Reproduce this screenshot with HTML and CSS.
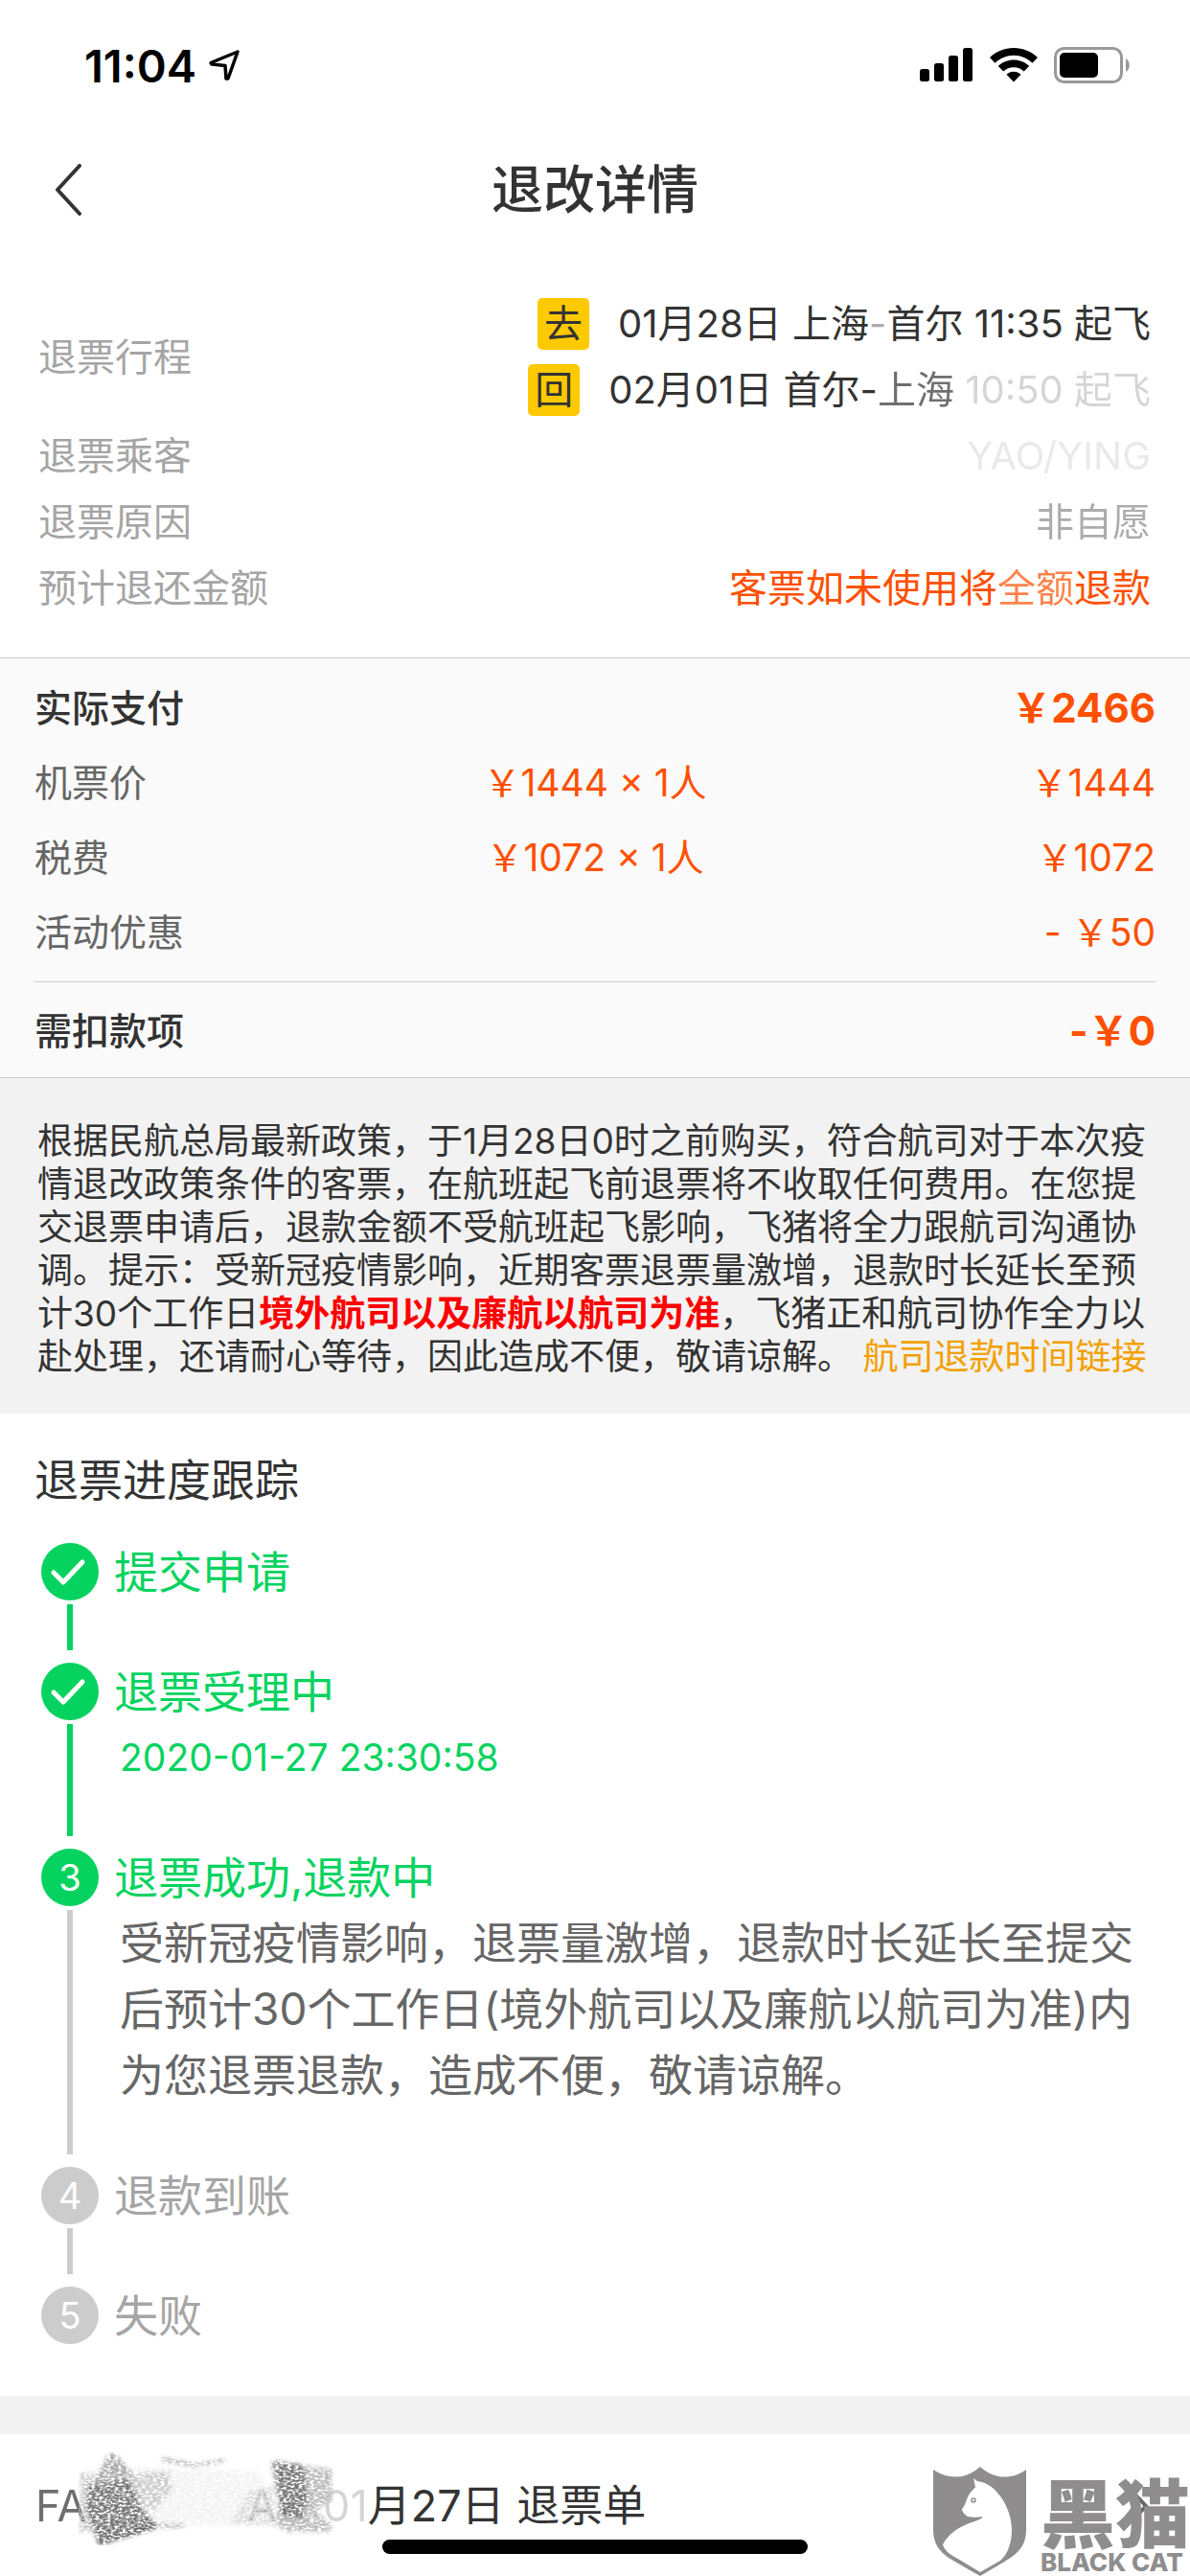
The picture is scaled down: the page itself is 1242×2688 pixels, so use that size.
FILE: index.html
```html
<!DOCTYPE html>
<html lang="zh-CN">
<head>
    <meta charset="UTF-8">
    <meta name="viewport" content="width=device-width, initial-scale=1.0">
    <title>退改详情</title>
    <link rel="stylesheet" href="styles.css">
</head>
<body>

<!-- Status bar -->
<div class="status-bar">
    <div class="status-left">
        <span class="clock">11:04</span>
        <svg class="icon-location" viewBox="0 0 34 34"><path d="M31 3 L3 14.500 L4 16 L18 17.500 L19 31 L21 31 Z" fill="none" stroke="#000" stroke-width="3.500" stroke-linejoin="round"/></svg>
    </div>
    <div class="status-right">
        <svg class="icon-signal" viewBox="0 0 56 36">
            <rect x="0" y="22" width="10" height="13" rx="2.500"/>
            <rect x="15" y="16" width="10" height="19" rx="2.500"/>
            <rect x="30" y="8" width="10" height="27" rx="2.500"/>
            <rect x="45" y="0" width="10" height="35" rx="2.500"/>
        </svg>
        <svg class="icon-wifi" viewBox="0 0 50 36">
            <path d="M25 0 C34.500 0 43.500 3.700 50 10 L44.500 15.700 C39.300 10.700 32.300 7.700 25 7.700 C17.700 7.700 10.700 10.700 5.500 15.700 L0 10 C6.500 3.700 15.500 0 25 0 Z"/>
            <path d="M25 12.500 C31.200 12.500 36.900 14.900 41.200 18.900 L35.700 24.400 C32.900 21.800 29.100 20.200 25 20.200 C20.900 20.200 17.100 21.800 14.300 24.400 L8.800 18.900 C13.100 14.900 18.800 12.500 25 12.500 Z"/>
            <path d="M25 24.800 C27.900 24.800 30.500 25.900 32.500 27.700 L25 35.500 L17.500 27.700 C19.500 25.900 22.100 24.800 25 24.800 Z"/>
        </svg>
        <svg class="icon-battery" viewBox="0 0 80 38">
            <rect x="1.500" y="1.500" width="69" height="35" rx="9" fill="none" stroke="#999" stroke-width="3"/>
            <rect x="6" y="6" width="40" height="26" rx="5"/>
            <path d="M75 12 C80 14.500 80 23.500 75 26 Z" fill="#999"/>
        </svg>
    </div>
</div>

<!-- Nav bar -->
<header class="nav">
    <button class="back" aria-label="返回">
        <svg viewBox="0 0 30 54"><path d="M27 2 L4 27 L27 52" fill="none" stroke="#333" stroke-width="4" stroke-linecap="round" stroke-linejoin="round"/></svg>
    </button>
    <h1>退改详情</h1>
</header>

<!-- Refund summary -->
<section class="summary">
    <div class="row">
        <span class="label">退票行程</span>
        <div class="trips">
            <p class="trip"><span class="tag">去</span><span>01月28日 上海<span class="fade-2">-</span>首尔 11:35 起飞</span></p>
            <p class="trip"><span class="tag">回</span><span>02月01日 首尔-<span class="fade-1">上海</span> <span class="fade-3">10:50 起飞</span></span></p>
        </div>
    </div>
    <div class="row"><span class="label">退票乘客</span><span class="fade-4">YAO/YING</span></div>
    <div class="row"><span class="label">退票原因</span><span class="fade-2">非自愿</span></div>
    <div class="row"><span class="label">预计退还金额</span><span class="price">客票如未使用将<span class="fade-1">全额</span>退款</span></div>
</section>

<!-- Price detail -->
<section class="bill">
    <div class="bill-row total"><span>实际支付</span><span></span><span class="price">￥2466</span></div>
    <div class="bill-row"><span>机票价</span><span class="price">￥1444 × 1人</span><span class="price">￥1444</span></div>
    <div class="bill-row"><span>税费</span><span class="price">￥1072 × 1人</span><span class="price">￥1072</span></div>
    <div class="bill-row"><span>活动优惠</span><span></span><span class="price">- ￥50</span></div>
    <div class="bill-row total deduct"><span>需扣款项</span><span></span><span class="price">-￥0</span></div>
</section>

<p class="notice">根据民航总局最新政策，于1月28日0时之前购买，符合航司对于本次疫情退改政策条件的客票，在航班起飞前退票将不收取任何费用。在您提交退票申请后，退款金额不受航班起飞影响，飞猪将全力跟航司沟通协调。提示：受新冠疫情影响，近期客票退票量激增，退款时长延长至预计30个工作日<strong>境外航司以及廉航以航司为准</strong>，飞猪正和航司协作全力以赴处理，还请耐心等待，因此造成不便，敬请谅解。 <a href="#">航司退款时间链接</a></p>

<!-- Progress -->
<section class="progress">
    <h2>退票进度跟踪</h2>
    <ol class="steps">
        <li class="step done">
            <div class="marker">
                <span class="dot"><svg viewBox="0 0 60 60"><path d="M13 31 L23 41 L43 20" fill="none" stroke="#fff" stroke-width="5" stroke-linecap="round" stroke-linejoin="round"/></svg></span>
                <span class="line"></span>
            </div>
            <div class="step-body"><h3>提交申请</h3></div>
        </li>
        <li class="step done">
            <div class="marker">
                <span class="dot"><svg viewBox="0 0 60 60"><path d="M13 31 L23 41 L43 20" fill="none" stroke="#fff" stroke-width="5" stroke-linecap="round" stroke-linejoin="round"/></svg></span>
                <span class="line"></span>
            </div>
            <div class="step-body">
                <h3>退票受理中</h3>
                <p class="time">2020-01-27 23:30:58</p>
            </div>
        </li>
        <li class="step current">
            <div class="marker"><span class="dot">3</span><span class="line"></span></div>
            <div class="step-body">
                <h3>退票成功,退款中</h3>
                <p>受新冠疫情影响，退票量激增，退款时长延长至提交后预计30个工作日(境外航司以及廉航以航司为准)内为您退票退款，造成不便，敬请谅解。</p>
            </div>
        </li>
        <li class="step">
            <div class="marker"><span class="dot">4</span><span class="line"></span></div>
            <div class="step-body"><h3>退款到账</h3></div>
        </li>
        <li class="step">
            <div class="marker"><span class="dot">5</span></div>
            <div class="step-body"><h3>失败</h3></div>
        </li>
    </ol>
</section>

<!-- Next order -->
<section class="order">
    <a class="order-link" href="#">
        <span class="order-name"><span class="fade-1">FA</span><span class="fade-2">A</span></span>
        <span><span class="fade-3">01</span>月27日 退票单</span>
        <svg class="icon-more" viewBox="0 0 20 36"><path d="M3 3 L17 18 L3 33" fill="none" stroke="#666" stroke-width="4"/></svg>
    </a>
    <!-- pencil scribble over the passenger name -->
    <svg class="scribble" viewBox="0 0 290 110">
        <defs>
            <filter id="grain" x="0" y="0" width="100%" height="100%">
                <feGaussianBlur in="SourceGraphic" stdDeviation="2" result="soft"/>
                <feTurbulence type="fractalNoise" baseFrequency="0.250 0.500" numOctaves="3" seed="4" result="n"/>
                <feColorMatrix in="n" type="matrix" values="0 0 0 0 0  0 0 0 0 0  0 0 0 0 0  0 0 0 4 -1.300" result="a"/>
                <feComposite in="soft" in2="a" operator="in"/>
            </filter>
        </defs>
        <g filter="url(#grain)">
            <path d="M4 22 H18 V84 H2 Z" fill="#ccc"/>
            <path d="M34 1 L40 2 L62 26 L66 50 L24 50 L8 46 L24 20 Z" fill="#aaa"/>
            <path d="M12 36 L60 28 L66 56 L84 76 L84 78 L22 96 L10 60 Z" fill="#777"/>
            <path d="M22 94 L84 74 V80 L24 98 Z" fill="#555"/>
            <path d="M60 16 L190 20 L204 50 L190 78 L84 78 L66 50 Z" fill="#f3f3f3"/>
            <path d="M54 24 L96 20 L100 40 L80 62 L68 58 Z" fill="#ccc"/>
            <path d="M88 6 L124 13 L156 8 L154 11 L124 16 L90 10 Z" fill="#999"/>
            <path d="M84 75 H112 V80 H84 Z" fill="#bbb"/>
            <path d="M160 76 L180 40 L206 36 L208 78 Z" fill="#ddd"/>
            <path d="M202 10 L266 18 L268 50 L250 62 L266 76 V84 H220 L206 76 L212 60 Z" fill="#bbb"/>
            <path d="M206 10 L236 14 L242 50 L236 72 L212 68 Z" fill="#777"/>
        </g>
    </svg>
    <div class="home-bar"></div>
    <div class="watermark">
        <svg class="shield" viewBox="0 0 98 115">
            <path d="M0 3 C16 14 35 13 49 0 C63 13 82 14 97 3 V66 C97 84 86 92 76 98 L49 114 L21 98 C11 92 0 84 0 66 Z" fill="#8f8d8e"/>
            <path d="M42 12 L46 15 C66 17 82 43 82 66 C82 82 76 93 70 98 L49 110 L24 95 C16 91 11 86 10 81 C16 70 26 63 40 58 C47 56 51 54 52 52 C46 53 41 53 36 52 C33 50 30 47 30 44 C34 40 34 34 38 28 C40 25 44 22 44 21 Z" fill="#fff"/>
            <circle cx="42" cy="35" r="2" fill="none" stroke="#8f8d8e" stroke-width="1.500"/>
        </svg>
        <div class="brand"><span class="brand-cn">黑猫</span><span class="brand-en">BLACK CAT</span></div>
    </div>
</section>

</body>
</html>
```
FILE: styles.css
```css
* {
    box-sizing: border-box;
}

body {
    margin: 0;
    background-color: #fff;
    font-family: Inter, "Noto Sans CJK SC", sans-serif;
    font-size: 40px;
    color: #333;
}

h1, h2, h3, p, ol {
    margin: 0;
    padding: 0;
    font-weight: 400;
}

a {
    color: inherit;
    text-decoration: none;
}

/* Status bar */
.status-bar {
    display: flex;
    justify-content: space-between;
    align-items: center;
    height: 136px;
    padding: 0 62px 0 88px;
}

.status-left, .status-right {
    display: flex;
    align-items: center;
}

.status-left {
    gap: 12px;
}

.status-right {
    gap: 17px;
}

.clock {
    font-size: 47px;
    font-weight: 600;
    color: #000;
}

.icon-location { width: 34px; height: 34px; }
.icon-signal { width: 56px; height: 36px; }
.icon-wifi { width: 50px; height: 36px; }
.icon-battery { width: 80px; height: 38px; }

/* Nav */
.nav {
    display: grid;
    grid-template-columns: 1fr auto 1fr;
    align-items: center;
    height: 124px;
    padding: 0 40px;
}

.nav h1 {
    padding-bottom: 8px;
    font-size: 54px;
    font-weight: 500;
}

.back {
    justify-self: start;
    padding: 0 16px;
    border: none;
    background: none;
}

.back svg {
    display: block;
    width: 30px;
    height: 54px;
}

/* Summary */
.summary {
    padding: 43px 41px 38px 40px;
}

.row {
    display: flex;
    justify-content: space-between;
    align-items: center;
    line-height: 69px;
}

.label {
    color: #a5a5a5;
}

.trips {
    display: flex;
    flex-direction: column;
    align-items: flex-end;
}

.trip {
    display: flex;
    align-items: center;
}

.tag {
    width: 54px;
    height: 54px;
    margin-right: 30px;
    border-radius: 5px;
    background-color: #ffc900;
    line-height: 54px;
    text-align: center;
}

.price {
    color: #ff5000;
}

/* rubbed out text */
.fade-1 { opacity: 0.7; }
.fade-2 { opacity: 0.4; }
.fade-3 { opacity: 0.2; }
.fade-4 { opacity: 0.1; }

/* Bill */
.bill {
    padding: 13px 36px 9px;
    border-top: 1px solid #ccc;
    border-bottom: 1px solid #ccc;
    background-color: #fafafa;
}

.bill-row {
    display: grid;
    grid-template-columns: 1fr auto 1fr;
    font-size: 39px;
    line-height: 78px;
    color: #666;
}

.bill-row > :last-child {
    text-align: right;
}

.total {
    font-weight: 500;
    color: #333;
}

.total .price {
    font-size: 42px;
    font-weight: 700;
}

.deduct {
    margin-top: 12px;
    padding-top: 12px;
    border-top: 1px solid #ccc;
}

/* Notice */
.notice {
    padding: 43px 36px 37px 39px;
    background-color: #f2f2f2;
    font-size: 37px;
    line-height: 45px;
}

.notice strong {
    font-weight: 700;
    color: #f00;
}

.notice a {
    color: #f2a000;
}

/* Progress */
.progress {
    padding: 35px 36px 50px;
}

.progress h2 {
    font-size: 46px;
    line-height: 69px;
}

.steps {
    margin-top: 31px;
    padding-left: 7px;
    list-style: none;
}

.step {
    display: flex;
    gap: 16px;
    color: #666;
}

.marker {
    display: flex;
    flex-direction: column;
    align-items: center;
}

.dot {
    width: 60px;
    height: 60px;
    border-radius: 50%;
    background-color: #ccc;
    font-size: 38px;
    line-height: 60px;
    text-align: center;
    color: #fff;
}

.dot svg {
    display: block;
}

.line {
    flex: 1;
    width: 6px;
    margin: 4px 0 13px;
    background-color: #ccc;
}

.step-body {
    flex: 1;
    padding-bottom: 61px;
}

.step:last-child .step-body {
    padding-bottom: 0;
}

.step h3 {
    margin-bottom: 4px;
    font-size: 46px;
    line-height: 60px;
    color: #a5a5a5;
}

.step p {
    padding-left: 6px;
    font-size: 46px;
    line-height: 69px;
}

.step .time {
    font-size: 39px;
}

.done .dot, .current .dot, .done .line {
    background-color: #06d35f;
}

.done, .done h3, .current h3 {
    color: #06d35f;
}

/* Next order */
.order {
    position: relative;
    height: 189px;
    border-top: 40px solid #f2f2f2;
    overflow: hidden;
}

.order-link {
    display: flex;
    align-items: center;
    padding: 0 43px 0 37px;
    font-size: 45px;
    line-height: 150px;
}

.order-name {
    display: flex;
    justify-content: space-between;
    width: 300px;
    padding-right: 48px;
}

.icon-more {
    width: 20px;
    height: 36px;
    margin-left: auto;
}

.scribble {
    position: absolute;
    left: 80px;
    top: 18px;
    width: 290px;
    height: 110px;
}

.home-bar {
    position: absolute;
    left: 50%;
    bottom: 24px;
    width: 444px;
    height: 15px;
    border-radius: 8px;
    background-color: #000;
    transform: translateX(-50%);
}

.watermark {
    position: absolute;
    right: 0;
    bottom: 0;
    display: flex;
    align-items: flex-end;
    gap: 14px;
    color: #8f8d8e;
}

.shield {
    width: 98px;
    height: 115px;
}

.brand {
    display: flex;
    flex-direction: column;
}

.brand-cn {
    font-family: "Noto Sans CJK SC", sans-serif;
    font-size: 78px;
    font-weight: 900;
    line-height: 80px;
}

.brand-en {
    font-size: 26px;
    font-weight: 800;
    line-height: 30px;
}
```
